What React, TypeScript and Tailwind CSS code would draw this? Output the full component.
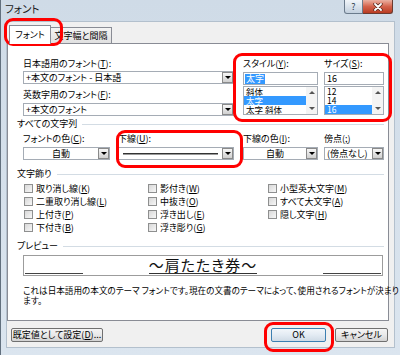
import clsx from "clsx";
import { ReactNode } from "react";

const jp = "font-['Noto_Sans_CJK_JP',sans-serif] [font-feature-settings:'palt']";

function Arrow({ up = false }: { up?: boolean }) {
  return (
    <span
      className={clsx(
        "w-0 h-0 border-l-[3px] border-r-[3px] border-l-transparent border-r-transparent",
        up ? "border-b-[3px] border-b-[#555]" : "border-t-[3px] border-t-black"
      )}
    />
  );
}

function DropBtn() {
  return (
    <div className="w-[11px] h-[11px] shrink-0 flex items-center justify-center border border-[#8a8a8a] bg-linear-to-b from-[#f7f7f7] to-[#d0d0d0]">
      <Arrow />
    </div>
  );
}

function Combo({ children, center = false }: { children: ReactNode; center?: boolean }) {
  return (
    <div className="h-[13px] flex items-center border border-[#a5acb5] bg-white">
      <div className={clsx("flex-1 px-[2px] leading-[11px] whitespace-nowrap", center && "text-center")}>
        {children}
      </div>
      <DropBtn />
    </div>
  );
}

function Label({ children }: { children: ReactNode }) {
  return <div className="h-[12px] leading-[12px] whitespace-nowrap">{children}</div>;
}

function Section({ title }: { title: string }) {
  return (
    <div className="h-[12px] flex items-center gap-[5px]">
      <span className="leading-[12px] whitespace-nowrap">{title}</span>
      <div className="flex-1 h-px bg-[#d3dce4]" />
    </div>
  );
}

function ListBox({ items, selected }: { items: string[]; selected: number }) {
  return (
    <div className="mt-px h-[29px] flex border border-[#a5acb5] bg-white">
      <div className="flex-1 flex flex-col text-[8.5px]">
        {items.map((item, i) => (
          <div
            key={item}
            className={clsx(
              "h-[9px] leading-[9px] px-[2px] whitespace-nowrap",
              i === selected && "bg-[#3399ff] text-white"
            )}
          >
            {item}
          </div>
        ))}
      </div>
      <div className="w-[11px] bg-[#f4f4f4] flex flex-col items-center justify-between py-[4px]">
        <Arrow up />
        <span className="w-0 h-0 border-l-[3px] border-r-[3px] border-t-[3px] border-l-transparent border-r-transparent border-t-[#555]" />
      </div>
    </div>
  );
}

function Check({ children }: { children: ReactNode }) {
  return (
    <div className="h-[13px] flex items-center gap-[3px] pl-px">
      <span className="w-[9px] h-[9px] border border-[#8e8f8f] bg-linear-to-br from-[#d8d8d8] to-[#f7f7f7]" />
      <span className="leading-[12px] whitespace-nowrap">{children}</span>
    </div>
  );
}

function Button({ children, focus = false, className }: { children: ReactNode; focus?: boolean; className?: string }) {
  return (
    <div
      className={clsx(
        "h-[14px] flex items-center justify-center rounded-[2px] border leading-[12px] whitespace-nowrap",
        focus
          ? "border-[#3c7fb1] bg-linear-to-b from-[#f2f6fa] via-[#e3ebf3] to-[#cfdbe6]"
          : "border-[#707070] bg-linear-to-b from-[#f4f4f4] via-[#e9e9e9] to-[#d2d2d2]",
        className
      )}
    >
      {children}
    </div>
  );
}

function RedBox({ className }: { className: string }) {
  return <div className={clsx("absolute border-[3px] border-[#ff0000] rounded-[9px] pointer-events-none", className)} />;
}

export default function App() {
  return (
    <div className={clsx("relative w-[400px] h-[355px] overflow-hidden bg-linear-to-b from-[#cfdbe7] to-[#dbe5ef] border-l border-[#62707e] text-black text-[9px] flex flex-col", jp)}>
      {/* title bar */}
      <div className="h-[21px] shrink-0 flex justify-between items-start pr-[7px]">
        <div className="pl-[4px] pt-[3px] text-[10.5px] leading-[12px] text-[#1a1a1a]">フォント</div>
        <div className="flex">
          <div className="w-[19px] h-[14px] rounded-bl-[3px] border border-t-0 border-[#6b7b8c] bg-linear-to-b from-[#f1f5f9] to-[#c3d0de] flex items-center justify-center text-[9px] leading-[10px] text-[#2b3b4b]">
            ?
          </div>
          <div className="w-[30px] h-[14px] rounded-br-[3px] border border-t-0 border-l-0 border-[#6a3a30] bg-linear-to-b from-[#eab0a2] via-[#d4624b] to-[#b93b22] flex items-center justify-center">
            <svg width="10" height="8" viewBox="0 0 10 8">
              <path d="M2 1 L8 7 M8 1 L2 7" stroke="#5a2a20" strokeWidth="3.4" strokeLinecap="round" />
              <path d="M2 1 L8 7 M8 1 L2 7" stroke="#ffffff" strokeWidth="1.8" strokeLinecap="round" />
            </svg>
          </div>
        </div>
      </div>

      {/* client area */}
      <div className="ml-[5px] w-[389px] h-[327px] border border-[#b3c0cd] bg-[#f0f0f0] flex flex-col">
        {/* tabs */}
        <div className="h-[21px] flex items-end pl-[2px]">
          <div className="relative z-10 -mb-px h-[19px] w-[42px] bg-white border border-b-0 border-[#898c95] flex items-center justify-center leading-[12px]">
            フォント
          </div>
          <div className="h-[16px] w-[61px] border border-l-0 border-b-0 border-[#898c95] bg-linear-to-b from-[#f4f4f4] to-[#e0e0e0] flex items-center justify-center leading-[12px]">
            文字幅と間隔
          </div>
        </div>

        {/* tab panel */}
        <div className="w-[382px] h-[278px] border border-[#898c95] bg-white pl-[9px] pr-[4px] pt-[14px] flex flex-col">
          <div className="pl-[6px] flex">
            <div className="w-[211px] flex flex-col">
              <Label>
                日本語用のフォント(<u>T</u>):
              </Label>
              <div className="mt-px">
                <Combo>+本文のフォント - 日本語</Combo>
              </div>
              <div className="mt-[5px]">
                <Label>
                  英数字用のフォント(<u>F</u>):
                </Label>
              </div>
              <div className="mt-[2px]">
                <Combo>+本文のフォント</Combo>
              </div>
            </div>
            <div className="ml-[9px] w-[75px] flex flex-col">
              <Label>
                スタイル(<u>Y</u>):
              </Label>
              <div className="mt-[2px] h-[13px] border border-[#a5acb5] bg-white flex items-center px-px">
                <span className="bg-[#3399ff] text-white leading-[10px] px-px">太字</span>
              </div>
              <ListBox items={["斜体", "太字", "太字 斜体"]} selected={1} />
            </div>
            <div className="ml-[6px] w-[60px] flex flex-col">
              <Label>
                サイズ(<u>S</u>):
              </Label>
              <div className="mt-[2px] h-[13px] border border-[#a5acb5] bg-white flex items-center px-[2px] leading-[10px]">
                16
              </div>
              <ListBox items={["12", "14", "16"]} selected={2} />
            </div>
          </div>

          <div className="mt-[2px]">
            <Section title="すべての文字列" />
          </div>
          <div className="mt-[3px] pl-[6px] flex">
            <div className="w-[87px] flex flex-col">
              <Label>
                フォントの色(<u>C</u>):
              </Label>
              <div className="mt-[2px]">
                <Combo center>自動</Combo>
              </div>
            </div>
            <div className="ml-[8px] w-[116px] flex flex-col">
              <Label>
                下線(<u>U</u>):
              </Label>
              <div className="mt-[2px] h-[13px] flex items-center border border-[#a5acb5] bg-white">
                <div className="flex-1 px-[4px]">
                  <div className="h-[2px] border-t border-[#333] border-b border-b-[#9a9a9a]" />
                </div>
                <DropBtn />
              </div>
            </div>
            <div className="ml-[9px] w-[75px] flex flex-col">
              <Label>
                下線の色(<u>I</u>):
              </Label>
              <div className="mt-[2px]">
                <Combo center>自動</Combo>
              </div>
            </div>
            <div className="ml-[6px] w-[60px] flex flex-col">
              <Label>
                傍点(<u>;</u>)
              </Label>
              <div className="mt-[2px]">
                <Combo>(傍点なし)</Combo>
              </div>
            </div>
          </div>

          <div className="mt-[8px]">
            <Section title="文字飾り" />
          </div>
          <div className="mt-[2px] pl-[6px] grid grid-cols-[124px_120px_1fr]">
            <div className="flex flex-col">
              <Check>
                取り消し線(<u>K</u>)
              </Check>
              <Check>
                二重取り消し線(<u>L</u>)
              </Check>
              <Check>
                上付き(<u>P</u>)
              </Check>
              <Check>
                下付き(<u>B</u>)
              </Check>
            </div>
            <div className="flex flex-col">
              <Check>
                影付き(<u>W</u>)
              </Check>
              <Check>
                中抜き(<u>O</u>)
              </Check>
              <Check>
                浮き出し(<u>E</u>)
              </Check>
              <Check>
                浮き彫り(<u>G</u>)
              </Check>
            </div>
            <div className="flex flex-col">
              <Check>
                小型英大文字(<u>M</u>)
              </Check>
              <Check>
                すべて大文字(<u>A</u>)
              </Check>
              <Check>
                隠し文字(<u>H</u>)
              </Check>
            </div>
          </div>

          <div className="mt-[6px]">
            <Section title="プレビュー" />
          </div>
          <div className="mt-[3px] ml-[6px] w-[360px] h-[21px] border border-[#9c9c9c] bg-white flex items-end justify-between px-[1px] pb-[1px]">
            <div className="w-[58px] h-px bg-[#444]" />
            <span className="text-[15px] leading-[16px] border-b border-[#333] tracking-[1px] text-[#111]">〜肩たたき券〜</span>
            <div className="w-[58px] h-px bg-[#444]" />
          </div>
          <div className="mt-[10px] pl-[6px] leading-[9.5px] text-[8.6px] whitespace-nowrap">
            これは日本語用の本文のテーマ フォントです。現在の文書のテーマによって、使用されるフォントが決まり
            <br />
            ます。
          </div>
        </div>

        {/* buttons */}
        <div className="mt-[7px] flex justify-between pl-[4px] pr-[6px]">
          <Button className="w-[92px]">
            既定値として設定(<u>D</u>)...
          </Button>
          <div className="flex gap-[9px]">
            <Button focus className="w-[55px]">
              OK
            </Button>
            <Button className="w-[53px]">キャンセル</Button>
          </div>
        </div>
      </div>

      {/* annotation marks */}
      <RedBox className="left-[3px] top-[18px] w-[59px] h-[28px]" />
      <RedBox className="left-[232px] top-[53px] w-[159px] h-[69px]" />
      <RedBox className="left-[115px] top-[130px] w-[127px] h-[38px]" />
      <RedBox className="left-[263px] top-[322px] w-[70px] h-[30px]" />
    </div>
  );
}
